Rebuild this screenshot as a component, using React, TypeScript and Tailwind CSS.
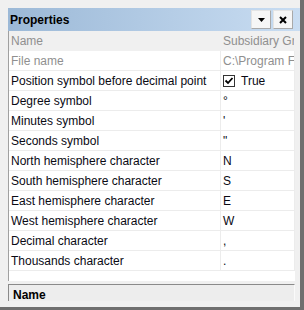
const font = { fontFamily: '"Liberation Sans", Arial, sans-serif' };

type Row = { label: string; value: string; kind?: "readonly" | "selected" | "check" };

const rows: Row[] = [
  { label: "Name", value: "Subsidiary Grid", kind: "selected" },
  { label: "File name", value: "C:\\Program Files\\Grid", kind: "readonly" },
  { label: "Position symbol before decimal point", value: "True", kind: "check" },
  { label: "Degree symbol", value: "°" },
  { label: "Minutes symbol", value: "'" },
  { label: "Seconds symbol", value: '"' },
  { label: "North hemisphere character", value: "N" },
  { label: "South hemisphere character", value: "S" },
  { label: "East hemisphere character", value: "E" },
  { label: "West hemisphere character", value: "W" },
  { label: "Decimal character", value: "," },
  { label: "Thousands character", value: "." },
];

function TitleButton({ children }: { children: React.ReactNode }) {
  return (
    <div className="w-5 h-[19px] flex items-center justify-center bg-[#f6f6f6] border border-[#a9a9a9] border-t-[#e4e4e4] border-l-[#e4e4e4]">
      {children}
    </div>
  );
}

function CheckBox() {
  return (
    <div className="w-[12px] h-[12px] border border-[#333333] bg-white flex items-center justify-center">
      <svg width="10" height="10" viewBox="0 0 10 10">
        <path d="M1.5 4.5 L4 7 L8.5 2" fill="none" stroke="#000" strokeWidth="1.8" />
      </svg>
    </div>
  );
}

function PropertyRow({ row }: { row: Row }) {
  const gray = row.kind === "readonly" || row.kind === "selected";
  return (
    <div
      className={`flex h-5 border-b overflow-hidden ${
        row.kind === "selected" ? "bg-[#f0f0f0] border-[#f0f0f0]" : "bg-white border-[#ececec]"
      }`}
    >
      <div
        className={`w-[211px] shrink-0 pl-[2px] pt-px h-[19px] leading-[19px] whitespace-nowrap overflow-hidden ${
          gray ? "text-[#8f8f8f]" : "text-[#0a0a14]"
        }`}
      >
        {row.label}
      </div>
      <div
        className={`flex-1 min-w-0 border-l border-r pl-[2px] h-[19px] whitespace-nowrap overflow-hidden ${
          row.kind === "selected" ? "border-[#f0f0f0]" : "border-[#ececec]"
        } ${gray ? "text-[#8f8f8f]" : "text-[#0a0a14]"}`}
      >
        {row.kind === "check" ? (
          <div className="flex items-center gap-[6px] h-full pt-px">
            <CheckBox />
            <span className="leading-[19px]">{row.value}</span>
          </div>
        ) : (
          <div className="pt-px leading-[19px]">{row.value}</div>
        )}
      </div>
    </div>
  );
}

export default function App() {
  return (
    <div
      style={font}
      className="w-[304px] h-[310px] bg-[#f0f0f0] border-r-4 border-b-[3px] border-[#6f6f6f] pl-2 pt-2 flex flex-col text-[12px] overflow-hidden"
    >
      {/* title bar */}
      <div className="h-[23px] shrink-0 flex items-center bg-gradient-to-r from-[#9cb9d7] to-[#c9ddf2] pl-[2px] pr-[7px]">
        <div className="font-bold text-black">Properties</div>
        <div className="ml-auto flex gap-[2px]">
          <TitleButton>
            <svg width="7" height="4" viewBox="0 0 7 4">
              <path d="M0 0 H7 L3.5 4 Z" fill="#000" />
            </svg>
          </TitleButton>
          <TitleButton>
            <svg width="8" height="8" viewBox="0 0 8 8">
              <path d="M1 1 L7 7 M7 1 L1 7" stroke="#000" strokeWidth="2" />
            </svg>
          </TitleButton>
        </div>
      </div>

      {/* property grid */}
      <div className="h-[250px] shrink-0 mr-[5px] bg-white border-l border-[#a0a0a0] flex flex-col">
        {rows.map((r) => (
          <PropertyRow key={r.label} row={r} />
        ))}
      </div>

      {/* description */}
      <div className="mt-[3px] h-[17px] shrink-0 mr-[5px] bg-[#ededed] border-t border-l border-[#8a8a8a] border-r border-r-[#fafafa] overflow-hidden pl-[4px] pt-[3px]">
        <div className="font-bold leading-[14px] text-black">Name</div>
      </div>
    </div>
  );
}
